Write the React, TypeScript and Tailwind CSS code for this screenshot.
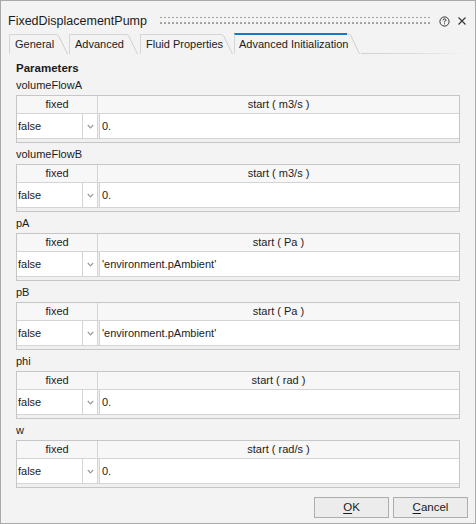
import React from "react";

type Param = { name: string; unit: string; value: string };

const params: Param[] = [
  { name: "volumeFlowA", unit: "m3/s", value: "0." },
  { name: "volumeFlowB", unit: "m3/s", value: "0." },
  { name: "pA", unit: "Pa", value: "'environment.pAmbient'" },
  { name: "pB", unit: "Pa", value: "'environment.pAmbient'" },
  { name: "phi", unit: "rad", value: "0." },
  { name: "w", unit: "rad/s", value: "0." },
];

function Tab({ label, width, active }: { label: string; width: string; active?: boolean }) {
  return (
    <div className="flex items-end h-[21px]">
      {active ? (
        <div className={`${width} h-[21px] flex items-center pl-[4px] border-l border-[#d6d6d6] border-t-2 border-t-[#1979c9] pb-[1px] whitespace-nowrap`}>
          {label}
        </div>
      ) : (
        <div className={`${width} h-[20px] flex items-center pl-[5px] border-l border-t border-[#d6d6d6] whitespace-nowrap`}>
          {label}
        </div>
      )}
      <svg width="13" height={active ? 21 : 20} className="block shrink-0">
        <path
          d={active ? "M0 1 L1.5 1 Q3 1 4 3 L12.5 21" : "M0 0.5 L1.5 0.5 Q3 0.5 4 2.5 L12.5 20"}
          stroke="#cfcfcf"
          strokeWidth="1"
          fill="none"
        />
      </svg>
    </div>
  );
}

function Chevron() {
  return (
    <svg width="7" height="5" viewBox="0 0 7 5" className="block">
      <path d="M0.8 1 L3.5 3.8 L6.2 1" stroke="#9a9a9a" strokeWidth="1.2" fill="none" />
    </svg>
  );
}

function ParamTable({ p }: { p: Param }) {
  return (
    <div className="mt-[2px] border border-[#c6c6c6] bg-[#f0f0f0] flex flex-col">
      <div className="flex h-[18px] bg-[#f7f7f7] border-b border-[#d4d4d4]">
        <div className="w-[81px] border-r border-[#d4d4d4] flex items-center justify-center">fixed</div>
        <div className="flex-1 flex items-center justify-center">start ( {p.unit} )</div>
      </div>
      <div className="flex h-[24px]">
        <div className="w-[66px] bg-white border-r border-[#d4d4d4] flex items-center pl-[1px]">false</div>
        <div className="w-[15px] bg-white border-r border-[#d4d4d4] flex items-center justify-center">
          <Chevron />
        </div>
        <div className="w-[1px]" />
        <div className="flex-1 bg-white border-l border-[#d4d4d4] flex items-center pl-[2px]">{p.value}</div>
      </div>
      <div className="h-[4px] border-t border-[#d4d4d4]" />
    </div>
  );
}

export default function App() {
  return (
    <div className="w-[476px] h-[524px] bg-[#f3f3f3] border border-[#a9a9a9] flex flex-col text-[#1b1b1b] font-['Liberation_Sans',Arial,sans-serif] text-[11px] leading-none">
      {/* title bar */}
      <div className="h-[32px] shrink-0 flex items-center pl-[7px] pr-[8px] pt-[8px]">
        <span className="text-[12.5px]">FixedDisplacementPump</span>
        <div className="flex-1 ml-[13px] mr-[7px] h-[10px]">
          <svg width="100%" height="10" className="block">
            <defs>
              <pattern id="grip" width="4" height="6" patternUnits="userSpaceOnUse">
                <rect x="0" y="0" width="2" height="2" fill="#a3a3a3" />
              </pattern>
            </defs>
            <rect x="0" y="1" width="100%" height="8" fill="url(#grip)" />
          </svg>
        </div>
        <svg width="11" height="11" viewBox="0 0 11 11" className="block">
          <circle cx="5.5" cy="5.5" r="4.6" stroke="#333" strokeWidth="1" fill="none" />
          <path d="M4 4.3 Q4 2.9 5.5 2.9 Q7 2.9 7 4.2 Q7 5 5.5 5.6 L5.5 6.4" stroke="#333" strokeWidth="1" fill="none" />
          <rect x="5" y="7.3" width="1" height="1" fill="#333" />
        </svg>
        <svg width="10" height="10" viewBox="0 0 10 10" className="block ml-[7px]">
          <path d="M1.5 1.5 L8.5 8.5 M8.5 1.5 L1.5 8.5" stroke="#333" strokeWidth="1.1" />
        </svg>
      </div>

      {/* tab strip */}
      <div className="flex items-end h-[21px] shrink-0 pl-[8px] pr-[8px] gap-[1px]">
        <Tab label="General" width="w-[46px]" />
        <Tab label="Advanced" width="w-[56px]" />
        <div className="ml-[1px]">
          <Tab label="Fluid Properties" width="w-[80px]" />
        </div>
        <Tab label="Advanced Initialization" width="w-[113px]" active />
        <div className="flex-1 h-[1px] bg-gradient-to-r from-[#d2d2d2] via-[#dcdcdc] to-transparent" />
      </div>

      {/* parameters */}
      <div className="flex flex-col px-[15px] pt-[7px]">
        <div className="h-[16px] flex items-center font-bold text-[11.5px]">Parameters</div>
        {params.map((p) => (
          <div key={p.name} className="flex flex-col mb-[3px]">
            <div className="h-[16px] flex items-center">{p.name}</div>
            <ParamTable p={p} />
          </div>
        ))}
      </div>

      {/* dialog buttons */}
      <div className="flex justify-end gap-[4px] pr-[7px] mt-[6px]">
        <button className="w-[75px] h-[21px] bg-[#ececec] border border-[#adadad] flex items-center justify-center text-[11.5px]">
          <span>
            <span className="underline underline-offset-2">O</span>K
          </span>
        </button>
        <button className="w-[75px] h-[21px] bg-[#ececec] border border-[#adadad] flex items-center justify-center text-[11.5px]">
          <span>
            <span className="underline underline-offset-2">C</span>ancel
          </span>
        </button>
      </div>
    </div>
  );
}
